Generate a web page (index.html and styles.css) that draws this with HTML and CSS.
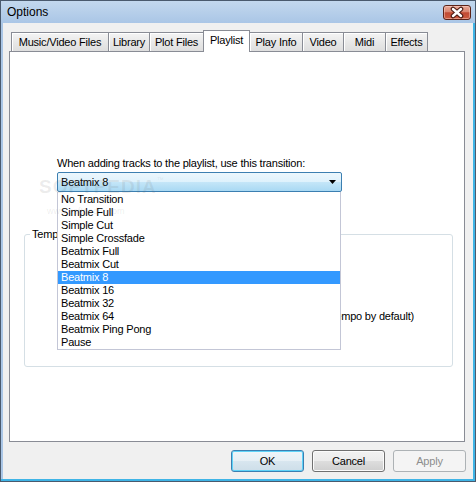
FILE: index.html
```html
<!DOCTYPE html>
<html>
<head>
<meta charset="utf-8">
<title>Options</title>
<link rel="stylesheet" href="styles.css">
</head>
<body>
<div class="window">
  <div class="titlebar">
    <span class="title">Options</span>
    <span class="close">
      <svg width="26" height="13" viewBox="0 0 26 13">
        <path d="M9 3 L17 10 M17 3 L9 10" stroke="#4a1a12" stroke-width="4.6" stroke-linecap="round"/>
        <path d="M9 3 L17 10 M17 3 L9 10" stroke="#ffffff" stroke-width="2.4" stroke-linecap="round"/>
      </svg>
    </span>
  </div>
  <div class="client">
    <div class="tabs">
      <div class="tab t1">Music/Video Files</div>
      <div class="tab t2">Library</div>
      <div class="tab t3">Plot Files</div>
      <div class="tab t4 selected">Playlist</div>
      <div class="tab t5">Play Info</div>
      <div class="tab t6">Video</div>
      <div class="tab t7">Midi</div>
      <div class="tab t8">Effects</div>
    </div>
    <div class="panel">
      <div class="prompt">When adding tracks to the playlist, use this transition:</div>
      <div class="combo">
        <span>Beatmix 8</span>
        <svg width="7" height="4" viewBox="0 0 7 4"><path d="M0 0 H7 L3.5 4 Z" fill="#000"/></svg>
      </div>
      <div class="group">
        <span class="group-title">Tempo</span>
        <div class="group-row">Estimate tempo of each track (use tempo by default)</div>
      </div>
      <ul class="droplist">
        <li>No Transition</li>
        <li>Simple Full</li>
        <li>Simple Cut</li>
        <li>Simple Crossfade</li>
        <li>Beatmix Full</li>
        <li>Beatmix Cut</li>
        <li class="active">Beatmix 8</li>
        <li>Beatmix 16</li>
        <li>Beatmix 32</li>
        <li>Beatmix 64</li>
        <li>Beatmix Ping Pong</li>
        <li>Pause</li>
      </ul>
    </div>
    <div class="buttons">
      <div class="btn default">OK</div>
      <div class="btn">Cancel</div>
      <div class="btn disabled">Apply</div>
    </div>
    <div class="watermark">SOFTPEDIA<span class="tm">™</span></div>
    <div class="watermark-url">www.softpedia.com</div>
  </div>
</div>
</body>
</html>
```

FILE: styles.css
```css
html, body {
  margin: 0;
  padding: 0;
}

body {
  font-family: "Liberation Sans", Arial, sans-serif;
  font-size: 11px;
  letter-spacing: -0.2px;
  color: #000;
  background: #f0f0f0;
}

.window {
  width: 476px;
  height: 482px;
  box-sizing: border-box;
  border: 1px solid #4a5a6e;
  padding: 0 2px 2px 2px;
  background: #aac6e6;
  box-shadow: inset -2px -2px 0 #3fb4e6;
  display: flex;
  flex-direction: column;
}

.titlebar {
  height: 22px;
  margin: 0 -2px;
  padding-left: 6px;
  display: flex;
  justify-content: space-between;
  align-items: flex-start;
  background: linear-gradient(#c3d8ee, #aac6e6);
}

.title {
  font-size: 12px;
  line-height: 23px;
  letter-spacing: 0;
  color: #000;
}

.close {
  margin: 4px 4px 0 0;
  width: 28px;
  height: 15px;
  box-sizing: border-box;
  border: 1px solid #5c2318;
  border-radius: 3px;
  background: linear-gradient(#e9a998 0%, #d98670 45%, #c14a33 52%, #cc5c40 100%);
  box-shadow: inset 0 0 0 1px rgba(255, 220, 210, 0.45);
  display: flex;
  align-items: center;
  justify-content: center;
}

.close svg {
  display: block;
}

.client {
  flex: 1;
  position: relative;
  background: #f0f0f0;
  padding: 7px 0 0 6px;
  display: flex;
  flex-direction: column;
}

.tabs {
  display: flex;
  align-items: flex-end;
  height: 21px;
  margin-left: 2px;
  position: relative;
  z-index: 2;
}

.tab {
  box-sizing: border-box;
  height: 19px;
  border: 1px solid #898c95;
  border-bottom: none;
  margin-left: -1px;
  padding-top: 3px;
  line-height: 13px;
  text-align: center;
  white-space: nowrap;
  background: linear-gradient(#f4f4f4, #e6e6e6 60%, #dedede);
  box-shadow: inset 1px 1px 0 #ffffff;
}

.tab.t1 { margin-left: 0; width: 98px; }
.tab.t2 { width: 42px; }
.tab.t3 { width: 55px; }
.tab.t4 { width: 47px; }
.tab.t5 { width: 54px; }
.tab.t6 { width: 42px; }
.tab.t7 { width: 43px; }
.tab.t8 { width: 43px; }

.tab.selected {
  height: 22px;
  margin-bottom: -1px;
  background: #ffffff;
  box-shadow: none;
  position: relative;
  z-index: 3;
}

.panel {
  width: 456px;
  height: 391px;
  box-sizing: border-box;
  border: 1px solid #898c95;
  background: #ffffff;
  position: relative;
  padding-top: 105px;
}

.prompt {
  margin-left: 47px;
  line-height: 13px;
  white-space: nowrap;
}

.combo {
  margin: 2px 0 0 47px;
  width: 285px;
  height: 20px;
  box-sizing: border-box;
  border: 1px solid #3c7fb1;
  border-radius: 2px;
  padding: 0 5px 0 3px;
  display: flex;
  align-items: center;
  justify-content: space-between;
  line-height: 13px;
  background: linear-gradient(#ecf7fd 0%, #dff2fc 48%, #c4e6f8 52%, #a9d9f3 100%);
}

.combo svg {
  display: block;
  margin-top: -1px;
}

.group {
  position: relative;
  margin: 42px 0 0 14px;
  width: 429px;
  height: 133px;
  box-sizing: border-box;
  border: 1px solid #d5dfe5;
  border-radius: 3px;
  padding: 75px 38px 0 0;
  text-align: right;
}

.group-title {
  position: absolute;
  top: -7px;
  left: 5px;
  padding: 0 2px;
  background: #ffffff;
  line-height: 13px;
}

.group-row {
  line-height: 13px;
  white-space: nowrap;
}

.droplist {
  position: absolute;
  left: 47px;
  top: 140px;
  z-index: 4;
  width: 284px;
  height: 158px;
  box-sizing: border-box;
  margin: 0;
  padding: 1px 0 0 0;
  list-style: none;
  background: #ffffff;
  border: 1px solid #c3c6d6;
  border-top: none;
}

.droplist li {
  height: 13px;
  line-height: 13px;
  padding-left: 3px;
  white-space: nowrap;
}

.droplist li.active {
  background: #3399ff;
  color: #ffffff;
}

.buttons {
  display: flex;
  justify-content: flex-end;
  gap: 8px;
  margin-top: 8px;
  padding-right: 7px;
}

.btn {
  width: 73px;
  height: 22px;
  box-sizing: border-box;
  border: 1px solid #707070;
  border-radius: 3px;
  display: flex;
  align-items: center;
  justify-content: center;
  line-height: 13px;
  background: linear-gradient(#f2f2f2 0%, #ebebeb 50%, #dddddd 51%, #cfcfcf 100%);
  box-shadow: inset 0 0 0 1px #fbfbfb;
}

.btn.default {
  border-color: #3c7fb1;
  background: linear-gradient(#eef5f9 0%, #e6eff5 50%, #d8e6ef 51%, #cddee9 100%);
  box-shadow: inset 0 0 0 1px #5fd3f8;
}

.btn.disabled {
  border-color: #adb2b5;
  background: #f4f4f4;
  box-shadow: none;
  color: #8d8d8d;
}

.watermark {
  position: absolute;
  left: 36px;
  top: 153px;
  z-index: 10;
  font-size: 19px;
  font-weight: bold;
  letter-spacing: 1px;
  color: rgba(110, 110, 110, 0.13);
  pointer-events: none;
}

.watermark .tm {
  font-size: 7px;
  vertical-align: top;
  font-weight: normal;
}

.watermark-url {
  position: absolute;
  left: 44px;
  top: 183px;
  z-index: 10;
  font-size: 9px;
  letter-spacing: 0;
  color: rgba(110, 110, 110, 0.12);
  pointer-events: none;
}
```
